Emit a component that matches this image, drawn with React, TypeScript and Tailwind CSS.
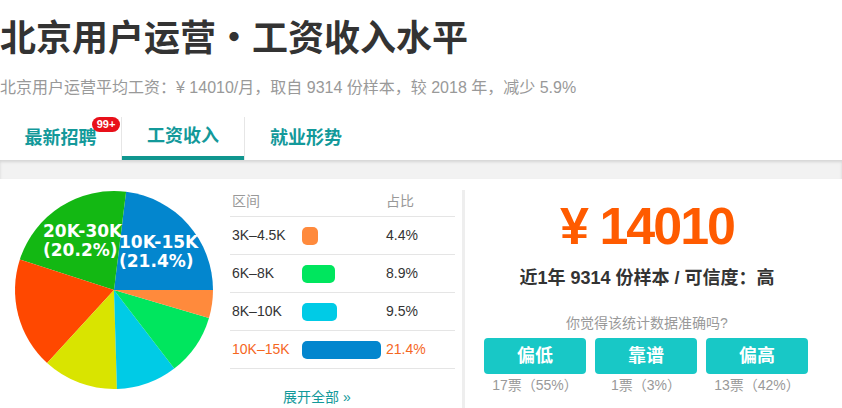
import React from "react";

const slices = [
  { from: 0, to: 83, color: "#0386ce" },
  { from: 83, to: 162, color: "#13b813" },
  { from: 162, to: 227.5, color: "#ff4800" },
  { from: 227.5, to: 271.7, color: "#d9e400" },
  { from: 271.7, to: 307.5, color: "#00cbe6" },
  { from: 307.5, to: 343.6, color: "#00e65e" },
  { from: 343.6, to: 360, color: "#ff8a3c" },
];

const rows = [
  { range: "3K–4.5K", bar: 16, color: "#ff8a3c", pct: "4.4%" },
  { range: "6K–8K", bar: 33, color: "#00e65e", pct: "8.9%" },
  { range: "8K–10K", bar: 35, color: "#00cbe6", pct: "9.5%" },
  { range: "10K–15K", bar: 79, color: "#0386ce", pct: "21.4%", hot: true },
];

const votes = [
  { label: "偏低", count: "17票（55%）" },
  { label: "靠谱", count: "1票（3%）" },
  { label: "偏高", count: "13票（42%）" },
];

// angle in degrees, counter-clockwise from 3 o'clock
const pt = (a: number, cx: number, cy: number, r: number) => {
  const t = (a * Math.PI) / 180;
  return [cx + r * Math.cos(t), cy - r * Math.sin(t)];
};

const Pie = () => {
  const cx = 114;
  const cy = 111;
  const r = 99;
  return (
    <svg width="230" height="229" viewBox="0 0 230 229">
      {slices.map((s, i) => {
        const [x1, y1] = pt(s.from, cx, cy, r);
        const [x2, y2] = pt(s.to, cx, cy, r);
        const large = s.to - s.from > 180 ? 1 : 0;
        return (
          <path
            key={i}
            d={`M${cx},${cy} L${x1},${y1} A${r},${r} 0 ${large} 0 ${x2},${y2} Z`}
            fill={s.color}
          />
        );
      })}
      <g
        fill="#fff"
        fontFamily="'DejaVu Sans', sans-serif"
        fontWeight="bold"
        fontSize="17"
      >
        <text x="43" y="58">20K-30K</text>
        <text x="43" y="77">(20.2%)</text>
        <text x="119" y="69">10K-15K</text>
        <text x="119" y="88">(21.4%)</text>
      </g>
    </svg>
  );
};

const App = () => {
  return (
    <div className="w-[842px] h-[408px] overflow-hidden bg-white font-['Liberation_Sans','Noto_Sans_CJK_SC',sans-serif]">
      <div className="pt-[17px]">
        <h1 className="text-[36px] leading-[44px] font-bold text-[#333] whitespace-nowrap">
          北京用户运营・工资收入水平
        </h1>
        <p className="mt-[16px] text-[16px] leading-[22px] text-[#999] whitespace-nowrap">
          北京用户运营平均工资：¥ 14010/月，取自 9314 份样本，较 2018 年，减少 5.9%
        </p>
        <div className="mt-[18px] flex h-[43px] text-[18px] font-bold text-[#13999a]">
          <div className="relative flex w-[121px] items-center justify-center">
            <span>最新招聘</span>
            <span className="absolute left-[92px] top-0 flex h-[15px] w-[28px] items-center justify-center rounded-full bg-[#e8101a] text-[11px] leading-none text-white">
              99+
            </span>
          </div>
          <div className="flex w-[124px] flex-col border-x border-[#e6e6e6]">
            <div className="flex flex-1 items-center justify-center">工资收入</div>
            <div className="h-[4px] bg-[#10968f]" />
          </div>
          <div className="flex w-[122px] items-center justify-center">就业形势</div>
        </div>
      </div>

      <div className="h-[19px] bg-[#f2f2f2] shadow-[inset_0_2px_3px_rgba(0,0,0,0.12)]" />

      <div className="flex h-[229px]">
        <Pie />

        <div className="w-[225px] pt-[7px] text-[14px]">
          <div className="flex h-[31px] items-center border-b border-[#e5e5e5] text-[#999]">
            <span className="w-[156px] pl-[2px]">区间</span>
            <span>占比</span>
          </div>
          {rows.map((r) => (
            <div
              key={r.range}
              className={`flex h-[38px] items-center border-b border-[#e5e5e5] ${
                r.hot ? "text-[#f5671f]" : "text-[#333]"
              }`}
            >
              <span className="w-[72px] pl-[2px]">{r.range}</span>
              <div className="w-[84px]">
                <div
                  className="h-[18px] rounded-[5px]"
                  style={{ width: r.bar, backgroundColor: r.color }}
                />
              </div>
              <span>{r.pct}</span>
            </div>
          ))}
          <div className="mt-[18px] pl-[53px] leading-[20px] text-[#13999a]">
            展开全部 »
          </div>
        </div>

        <div className="ml-[7px] mt-[11px] w-[3px] bg-[#eeeeee]" />

        <div className="w-[364px] pl-[19px] text-center">
          <div className="pt-[17px] pr-[19px] text-[52px] leading-[60px] font-bold tracking-[-2px] text-[#ff5b00]">
            ¥ 14010
          </div>
          <div className="mt-[10px] pr-[19px] text-[18px] leading-[24px] font-bold text-[#333]">
            近1年 9314 份样本 / 可信度：高
          </div>
          <div className="mt-[23px] pr-[19px] text-[14px] leading-[20px] text-[#999]">
            你觉得该统计数据准确吗?
          </div>
          <div className="mt-[5px] flex gap-[9px]">
            {votes.map((v) => (
              <div key={v.label} className="w-[102px]">
                <div className="flex h-[36px] items-center justify-center rounded-[4px] bg-[#18c8c6] text-[18px] font-bold text-white">
                  {v.label}
                </div>
                <div className="mt-[2px] text-[14px] leading-[18px] text-[#999]">
                  {v.count}
                </div>
              </div>
            ))}
          </div>
        </div>
      </div>
    </div>
  );
};

export default App;
